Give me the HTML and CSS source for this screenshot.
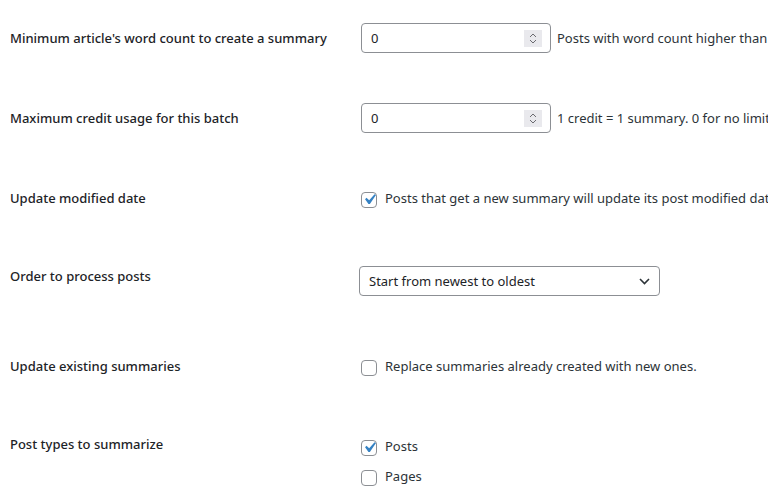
FILE: index.html
```html
<!DOCTYPE html>
<html lang="en">
<head>
<meta charset="utf-8">
<title>Settings</title>
<link rel="stylesheet" href="styles.css">
</head>
<body>
<div class="form">
  <div class="row r1">
    <div class="label">Minimum article's word count to create a summary</div>
    <div class="field">
      <div class="num"><span class="val">0</span><span class="spin"><svg width="18" height="17" viewBox="0 0 18 17"><rect width="18" height="17" fill="#e9e9ed"/><path d="M6 7 L9 4 L12 7" fill="none" stroke="#6b6b70" stroke-width="1"/><path d="M6 10 L9 13 L12 10" fill="none" stroke="#6b6b70" stroke-width="1"/></svg></span></div>
      <span class="desc">Posts with word count higher than this value will be summarized.</span>
    </div>
  </div>
  <div class="row r2">
    <div class="label">Maximum credit usage for this batch</div>
    <div class="field">
      <div class="num"><span class="val">0</span><span class="spin"><svg width="18" height="17" viewBox="0 0 18 17"><rect width="18" height="17" fill="#e9e9ed"/><path d="M6 7 L9 4 L12 7" fill="none" stroke="#6b6b70" stroke-width="1"/><path d="M6 10 L9 13 L12 10" fill="none" stroke="#6b6b70" stroke-width="1"/></svg></span></div>
      <span class="desc">1 credit = 1 summary. 0 for no limit.</span>
    </div>
  </div>
  <div class="row r3">
    <div class="label">Update modified date</div>
    <div class="field">
      <label class="check"><span class="box on"><svg width="21" height="21" viewBox="0 0 20 20"><path d="M14.83 4.89l1.34.94-5.81 8.38H9.02L5.78 9.67l1.34-1.25 2.57 2.4z" fill="#3582c4"/></svg></span><span class="desc">Posts that get a new summary will update its post modified date.</span></label>
    </div>
  </div>
  <div class="row r4">
    <div class="label">Order to process posts</div>
    <div class="field">
      <div class="select"><span class="val">Start from newest to oldest</span><svg width="11" height="7" viewBox="0 0 11 7"><path d="M1 1 L5.5 5.5 L10 1" fill="none" stroke="#2c3338" stroke-width="1.6"/></svg></div>
    </div>
  </div>
  <div class="row r5">
    <div class="label">Update existing summaries</div>
    <div class="field">
      <label class="check"><span class="box"></span><span class="desc">Replace summaries already created with new ones.</span></label>
    </div>
  </div>
  <div class="row r6">
    <div class="label">Post types to summarize</div>
    <div class="field list">
      <label class="check"><span class="box on"><svg width="21" height="21" viewBox="0 0 20 20"><path d="M14.83 4.89l1.34.94-5.81 8.38H9.02L5.78 9.67l1.34-1.25 2.57 2.4z" fill="#3582c4"/></svg></span><span class="desc">Posts</span></label>
      <label class="check"><span class="box"></span><span class="desc">Pages</span></label>
    </div>
  </div>
</div>
</body>
</html>
```
FILE: styles.css
```css
html, body {
  margin: 0;
  background: #ffffff;
  overflow: hidden;
}
body {
  font-family: "Noto Sans", "Open Sans", sans-serif;
  font-size: 13px;
  color: #1d2327;
}
.form {
  width: 768px;
}
.row {
  display: grid;
  grid-template-columns: 351px 1fr;
  padding-left: 10px;
  align-items: start;
  white-space: nowrap;
  overflow: hidden;
}
.label {
  font-weight: 500;
  line-height: 30px;
}
.field {
  display: flex;
  align-items: center;
  min-width: 0;
}
.r1, .r2 { height: 80px; padding-top: 23px; box-sizing: border-box; }
.r3 { height: 80px; padding-top: 23px; box-sizing: border-box; }
.r4 { height: 90px; padding-top: 21px; box-sizing: border-box; }
.r4 .field { margin-top: 5px; margin-left: -2px; }
.r5 { height: 80px; padding-top: 21px; box-sizing: border-box; }
.r6 { height: 90px; padding-top: 19px; box-sizing: border-box; }
.r6 .field { margin-top: 2px; }
.list {
  flex-direction: column;
  align-items: flex-start;
}
.num {
  box-sizing: border-box;
  width: 190px;
  height: 30px;
  border: 1px solid #8c8f94;
  border-radius: 4px;
  display: flex;
  align-items: center;
  justify-content: space-between;
  padding: 0 8px 0 9px;
  flex: none;
}
.spin {
  display: flex;
}
.num + .desc {
  margin-left: 6px;
}
.desc {
  color: #2c3338;
}
.check {
  display: flex;
  align-items: center;
  height: 30px;
}
.box {
  box-sizing: border-box;
  width: 16px;
  height: 16px;
  border: 1px solid #8c8f94;
  border-radius: 4px;
  margin-right: 8px;
  margin-top: 3px;
  display: flex;
  align-items: center;
  justify-content: center;
  flex: none;
  background: #fff;
}
.box svg {
  flex: none;
  margin: -3px -4px;
}
.select {
  box-sizing: border-box;
  width: 301px;
  height: 30px;
  border: 1px solid #8c8f94;
  border-radius: 4px;
  display: flex;
  align-items: center;
  justify-content: space-between;
  padding: 0 9px 0 9px;
}
.select svg {
  margin-top: 1px;
}
```
